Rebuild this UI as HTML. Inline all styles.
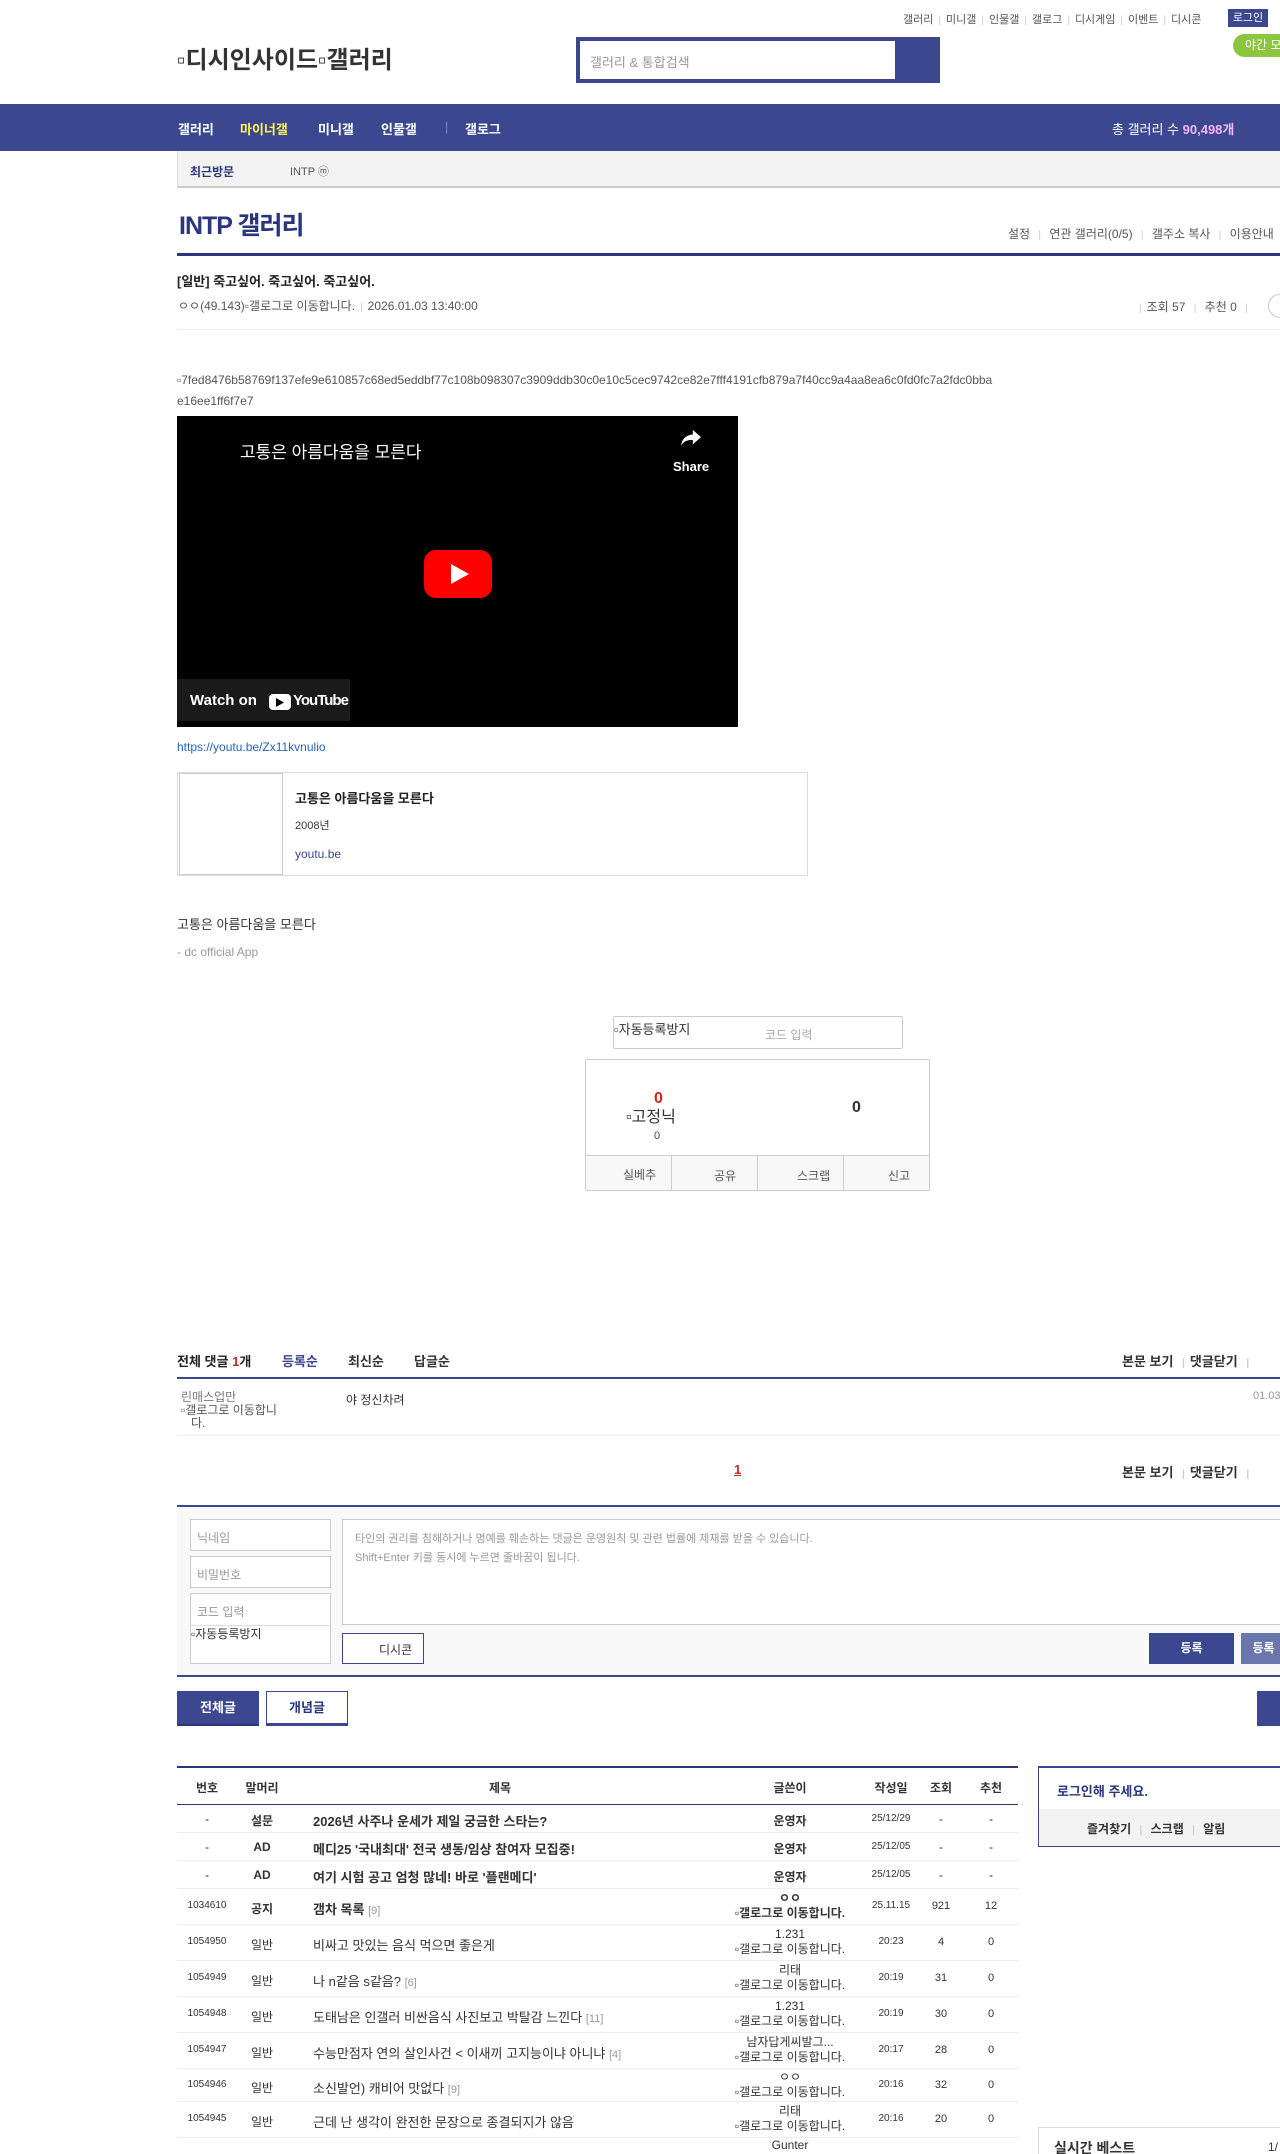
<!DOCTYPE html>
<html><head><meta charset="utf-8">
<style>
*{box-sizing:border-box;margin:0;padding:0}
html,body{width:1280px;height:2154px;overflow:hidden;background:#fff}
body{font-family:"Liberation Sans","Noto Sans CJK KR",sans-serif;color:#333;font-size:12px;position:relative}
.a{position:absolute;white-space:nowrap}
.nav{background:#3b4890;top:104px;left:0;width:1280px;height:47px}
.nav span{position:absolute;top:15px;color:#fff;font-weight:bold;font-size:13px}
.sep{color:#ccc;margin:0 5px;font-size:10px}
.navy{color:#29367c}
.tbl .r{position:absolute;left:177px;width:841px;border-bottom:1px solid #eee}
.tbl .c{position:absolute;font-size:12px;text-align:center;white-space:nowrap}
.ti{position:absolute;left:136px;font-size:13px;white-space:nowrap}
.inp{position:absolute;left:190px;width:141px;height:32px;border:1px solid #ccc;background:#fff;color:#999;font-size:12px;padding:9px 6px}
.btn{position:absolute;font-size:13px;font-weight:bold;text-align:center}
</style></head><body>
<div class="a" style="top:11px;left:903px;font-size:11px;color:#555">갤러리<span class="sep">|</span>미니갤<span class="sep">|</span>인물갤<span class="sep">|</span>갤로그<span class="sep">|</span>디시게임<span class="sep">|</span>이벤트<span class="sep">|</span>디시콘</div>
<div class="a" style="top:9px;left:1228px;width:40px;height:18px;background:#3b4890;color:#fff;font-size:11px;text-align:center;line-height:18px">로그인</div>
<div class="a" style="top:34px;left:1233px;width:60px;height:23px;background:#8bc63e;color:#fff;border-radius:12px;font-size:12px;line-height:23px;padding-left:12px">야간 모드</div>
<div class="a" style="top:40px;left:177px;font-size:24px;font-weight:bold;color:#333">▫디시인사이드▫갤러리</div>
<div class="a" style="top:37px;left:576px;width:364px;height:46px;background:#3b4890"></div>
<div class="a" style="top:41px;left:580px;width:315px;height:38px;background:#fff;color:#999;font-size:13px;padding:11px 10px">갤러리 &amp; 통합검색</div>
<div class="a nav"><span style="left:178px">갤러리</span><span style="left:240px;color:#fff34a">마이너갤</span><span style="left:318px">미니갤</span><span style="left:381px">인물갤</span><span style="left:445px;color:#7c86b8;font-weight:normal">|</span><span style="left:465px">갤로그</span><span style="left:1112px;font-weight:normal">총 갤러리 수 <b style="color:#f8b4ff">90,498개</b></span></div>
<div class="a" style="top:151px;left:177px;width:1103px;height:37px;background:#f3f3f3;border-left:1px solid #ddd;border-bottom:2px solid #ccc"></div>
<div class="a navy" style="top:163px;left:190px;font-size:12px;font-weight:bold">최근방문</div>
<div class="a" style="top:163px;left:290px;font-size:11px;color:#555">INTP ⓜ</div>
<div class="a navy" style="top:206px;left:179px;font-size:25px;font-weight:bold;letter-spacing:-1px">INTP 갤러리</div>
<div class="a" style="top:225px;left:1008px;font-size:12px;color:#555">설정 <span class="sep">|</span> 연관 갤러리(0/5) <span class="sep">|</span> 갤주소 복사 <span class="sep">|</span> 이용안내</div>
<div class="a" style="top:253px;left:177px;width:1103px;height:3px;background:#29367c"></div>
<div class="a" style="top:271px;left:177px;font-size:13px;font-weight:bold;color:#222">[일반] 죽고싶어. 죽고싶어. 죽고싶어.</div>
<div class="a" style="top:297px;left:178px;font-size:12px;color:#555">ㅇㅇ(49.143)▫갤로그로 이동합니다.<span class="sep">|</span>2026.01.03 13:40:00</div>
<div class="a" style="top:298px;left:1134px;font-size:12px;color:#555"><span class="sep">|</span>조회 57 <span class="sep">|</span> 추천 0 <span class="sep">|</span></div>
<div class="a" style="top:294px;left:1268px;width:24px;height:24px;border:1px solid #ccc;border-radius:12px"></div>
<div class="a" style="top:329px;left:177px;width:1103px;height:1px;background:#eee"></div>
<div class="a" style="top:373px;left:177px;font-size:12px;color:#555">▫7fed8476b58769f137efe9e610857c68ed5eddbf77c108b098307c3909ddb30c0e10c5cec9742ce82e7fff4191cfb879a7f40cc9a4aa8ea6c0fd0fc7a2fdc0bba</div>
<div class="a" style="top:394px;left:177px;font-size:12px;color:#555">e16ee1ff6f7e7</div>
<div class="a" style="top:416px;left:177px;width:561px;height:311px;background:#000"></div>
<div class="a" style="top:438px;left:240px;font-size:17px;color:#fff">고통은 아름다움을 모른다</div>
<svg class="a" style="top:428px;left:680px" width="22" height="20" viewBox="0 0 24 22"><path d="M14 2 L23 10 L14 18 V13 C7 13 3 15 1 20 C2 12 6 8 14 7 Z" fill="#fff"/></svg>
<div class="a" style="top:459px;left:673px;font-size:13px;color:#fff;font-weight:bold">Share</div>
<svg class="a" style="top:550px;left:424px" width="68" height="48" viewBox="0 0 68 48"><rect x="0" y="0" width="68" height="48" rx="12" fill="#f00"/><path d="M27 14 L45 24 L27 34 Z" fill="#fff"/></svg>
<div class="a" style="top:679px;left:177px;width:173px;height:42px;background:#1a1a1a"></div>
<div class="a" style="top:692px;left:190px;font-size:15px;color:#fff;font-weight:bold">Watch on</div>
<div class="a" style="top:694px;left:269px;width:22px;height:16px;background:#fff;border-radius:4px"></div>
<svg class="a" style="top:698px;left:276px" width="9" height="9"><path d="M0 0 L8 4.5 L0 9Z" fill="#000"/></svg>
<div class="a" style="top:692px;left:293px;font-size:15px;color:#fff;font-weight:bold;letter-spacing:-1px">YouTube</div>
<div class="a" style="top:740px;left:177px;font-size:12px;color:#2266bb">https://youtu.be/Zx11kvnulio</div>
<div class="a" style="top:772px;left:177px;width:631px;height:104px;border:1px solid #ddd"></div>
<div class="a" style="top:773px;left:179px;width:104px;height:102px;border:1px solid #ccc;background:#fff"></div>
<div class="a" style="top:788px;left:295px;font-size:13px;font-weight:bold;color:#222">고통은 아름다움을 모른다</div>
<div class="a" style="top:817px;left:295px;font-size:11px;color:#333">2008년</div>
<div class="a" style="top:847px;left:295px;font-size:12px;color:#3b4890">youtu.be</div>
<div class="a" style="top:914px;left:177px;font-size:13px;color:#333">고통은 아름다움을 모른다</div>
<div class="a" style="top:945px;left:177px;font-size:12px;color:#999">- dc official App</div>
<div class="a" style="top:1016px;left:613px;width:290px;height:33px;border:1px solid #ccc;border-radius:2px"></div>
<div class="a" style="top:1019px;left:614px;font-size:13px;color:#333">▫자동등록방지</div>
<div class="a" style="top:1026px;left:765px;font-size:12px;color:#aaa">코드 입력</div>
<div class="a" style="top:1059px;left:585px;width:345px;height:132px;border:1px solid #ccc;border-radius:2px"></div>
<div class="a" style="top:1155px;left:586px;width:343px;height:35px;background:#f8f8f8;border-top:1px solid #ccc"></div>
<div class="a" style="top:1155px;left:671px;width:1px;height:36px;background:#ccc"></div>
<div class="a" style="top:1155px;left:757px;width:1px;height:36px;background:#ccc"></div>
<div class="a" style="top:1155px;left:843px;width:1px;height:36px;background:#ccc"></div>
<div class="a" style="top:1166px;left:623px;font-size:12px;color:#555">실베추</div>
<div class="a" style="top:1167px;left:714px;font-size:12px;color:#555">공유</div>
<div class="a" style="top:1167px;left:797px;font-size:12px;color:#555">스크랩</div>
<div class="a" style="top:1167px;left:888px;font-size:12px;color:#555">신고</div>
<div class="a" style="top:1090px;left:654px;font-size:16px;font-weight:bold;color:#c82a1e;line-height:18px">0</div>
<div class="a" style="top:1109px;left:626px;font-size:16px;color:#333;line-height:18px">▫고정닉</div>
<div class="a" style="top:1130px;left:654px;font-size:11px;color:#3b4890;line-height:12px">0</div>
<div class="a" style="top:1099px;left:852px;font-size:16px;font-weight:bold;color:#333">0</div>
<div class="a" style="top:1351px;left:177px;font-size:13px;font-weight:bold;color:#222">전체 댓글 <span style="color:#c82a1e">1</span>개</div>
<div class="a" style="top:1351px;left:282px;font-size:13px;font-weight:bold;color:#3b4890">등록순</div>
<div class="a" style="top:1351px;left:348px;font-size:13px;font-weight:bold;color:#333">최신순</div>
<div class="a" style="top:1351px;left:414px;font-size:13px;font-weight:bold;color:#333">답글순</div>
<div class="a" style="top:1351px;left:1122px;font-size:13px;font-weight:bold;color:#333">본문 보기 <span class="sep">|</span>댓글닫기 <span class="sep">|</span></div>
<div class="a" style="top:1377px;left:177px;width:1103px;height:2px;background:#3b4890"></div>
<div class="a" style="top:1390px;left:181px;font-size:12px;color:#777;line-height:14px">린매스업만</div>
<div class="a" style="top:1404px;left:181px;font-size:12px;color:#555;line-height:13px;white-space:normal;width:130px">▫갤로그로 이동합니<br>&nbsp;&nbsp;&nbsp;다.</div>
<div class="a" style="top:1391px;left:346px;font-size:12px;color:#333">야 정신차려</div>
<div class="a" style="top:1390px;left:1253px;font-size:11px;color:#999">01.03</div>
<div class="a" style="top:1435px;left:177px;width:1103px;height:1px;background:#eee"></div>
<div class="a" style="top:1462px;left:734px;font-size:13px;font-weight:bold;color:#c82a1e;text-decoration:underline">1</div>
<div class="a" style="top:1462px;left:1122px;font-size:13px;font-weight:bold;color:#333">본문 보기 <span class="sep">|</span>댓글닫기 <span class="sep">|</span></div>
<div class="a" style="top:1505px;left:177px;width:1103px;height:172px;background:#f9f9f9;border-top:2px solid #3b4890;border-bottom:2px solid #3b4890"></div>
<div class="inp" style="top:1519px">닉네임</div>
<div class="inp" style="top:1556px">비밀번호</div>
<div class="inp" style="top:1593px;height:71px">코드 입력</div>
<div class="a" style="top:1625px;left:191px;font-size:12px;color:#333">▫자동등록방지</div>
<div class="a" style="top:1625px;left:191px;width:139px;height:1px;background:#ddd"></div>
<div class="a" style="top:1519px;left:342px;width:950px;height:106px;border:1px solid #ccc;background:#fff;font-size:11px;color:#999;padding:10px 12px;line-height:19px;white-space:normal">타인의 권리를 침해하거나 명예를 훼손하는 댓글은 운영원칙 및 관련 법률에 제재를 받을 수 있습니다.<br>Shift+Enter 키를 동시에 누르면 줄바꿈이 됩니다.</div>
<div class="a" style="top:1633px;left:342px;width:82px;height:31px;border:1px solid #3b4890;background:#fff;font-size:12px;color:#333;padding:7px 0 0 36px">디시콘</div>
<div class="btn" style="top:1633px;left:1149px;width:85px;height:31px;background:#3b4890;color:#fff;line-height:31px;font-size:12px">등록</div>
<div class="btn" style="top:1633px;left:1241px;width:85px;height:31px;background:#6b76ac;color:#fff;line-height:31px;font-size:12px;padding-right:40px">등록</div>
<div class="btn" style="top:1691px;left:177px;width:82px;height:35px;background:#3b4890;color:#fff;line-height:33px;border-bottom:2px solid #29367c">전체글</div>
<div class="btn" style="top:1691px;left:266px;width:82px;height:35px;background:#fff;color:#29367c;line-height:31px;border:1px solid #3b4890;border-bottom:3px solid #3b4890">개념글</div>
<div class="btn" style="top:1691px;left:1257px;width:40px;height:35px;background:#3b4890"></div>
<div class="tbl">
<div class="a" style="top:1766px;left:177px;width:841px;height:2px;background:#29367c"></div>
<div class="a" style="top:1804px;left:177px;width:841px;height:1px;background:#29367c"></div>
<div class="c" style="top:1779px;left:187px;width:40px;font-weight:bold">번호</div>
<div class="c" style="top:1779px;left:238px;width:48px;font-weight:bold">말머리</div>
<div class="c" style="top:1779px;left:470px;width:60px;font-weight:bold">제목</div>
<div class="c" style="top:1779px;left:760px;width:60px;font-weight:bold">글쓴이</div>
<div class="c" style="top:1779px;left:866px;width:50px;font-weight:bold">작성일</div>
<div class="c" style="top:1779px;left:926px;width:30px;font-weight:bold">조회</div>
<div class="c" style="top:1779px;left:976px;width:30px;font-weight:bold">추천</div>
<div class="r" style="top:1805px;height:28px"><div class="c" style="top:7px;left:10px;width:40px">-</div><div class="c" style="top:7px;left:61px;width:48px;font-weight:bold">설문</div><div class="ti" style="top:6px;font-weight:bold">2026년 사주나 운세가 제일 궁금한 스타는?</div><div class="c" style="top:7px;left:583px;width:60px;font-weight:bold">운영자</div><div class="c" style="top:8px;left:689px;width:50px;font-size:10px">25/12/29</div><div class="c" style="top:7px;left:749px;width:30px">-</div><div class="c" style="top:7px;left:799px;width:30px">-</div></div>
<div class="r" style="top:1833px;height:28px"><div class="c" style="top:7px;left:10px;width:40px">-</div><div class="c" style="top:7px;left:61px;width:48px;font-weight:bold">AD</div><div class="ti" style="top:6px;font-weight:bold">메디25 '국내최대' 전국 생동/임상 참여자 모집중!</div><div class="c" style="top:7px;left:583px;width:60px;font-weight:bold">운영자</div><div class="c" style="top:8px;left:689px;width:50px;font-size:10px">25/12/05</div><div class="c" style="top:7px;left:749px;width:30px">-</div><div class="c" style="top:7px;left:799px;width:30px">-</div></div>
<div class="r" style="top:1861px;height:28px"><div class="c" style="top:7px;left:10px;width:40px">-</div><div class="c" style="top:7px;left:61px;width:48px;font-weight:bold">AD</div><div class="ti" style="top:6px;font-weight:bold">여기 시험 공고 엄청 많네! 바로 '플랜메디'</div><div class="c" style="top:7px;left:583px;width:60px;font-weight:bold">운영자</div><div class="c" style="top:8px;left:689px;width:50px;font-size:10px">25/12/05</div><div class="c" style="top:7px;left:749px;width:30px">-</div><div class="c" style="top:7px;left:799px;width:30px">-</div></div>
<div class="r" style="top:1889px;height:36px"><div class="c" style="top:11px;left:5px;width:50px;font-size:10px">1034610</div><div class="c" style="top:11px;left:61px;width:48px;font-weight:bold">공지</div><div class="ti" style="top:10px;font-weight:bold">갬차 목록 <span style="color:#999;font-weight:normal;font-size:11px">[9]</span></div><div class="c" style="top:2px;left:543px;width:140px;line-height:15px;font-weight:bold">ㅇㅇ<br>▫갤로그로 이동합니다.</div><div class="c" style="top:11px;left:689px;width:50px;font-size:10px">25.11.15</div><div class="c" style="top:11px;left:749px;width:30px;font-size:11px">921</div><div class="c" style="top:11px;left:799px;width:30px;font-size:11px">12</div></div>
<div class="r" style="top:1925px;height:36px"><div class="c" style="top:11px;left:5px;width:50px;font-size:10px">1054950</div><div class="c" style="top:11px;left:61px;width:48px">일반</div><div class="ti" style="top:10px">비싸고 맛있는 음식 먹으면 좋은게</div><div class="c" style="top:2px;left:543px;width:140px;line-height:15px">1.231<br>▫갤로그로 이동합니다.</div><div class="c" style="top:11px;left:689px;width:50px;font-size:10px">20:23</div><div class="c" style="top:11px;left:749px;width:30px;font-size:11px">4</div><div class="c" style="top:11px;left:799px;width:30px;font-size:11px">0</div></div>
<div class="r" style="top:1961px;height:36px"><div class="c" style="top:11px;left:5px;width:50px;font-size:10px">1054949</div><div class="c" style="top:11px;left:61px;width:48px">일반</div><div class="ti" style="top:10px">나 n같음 s같음? <span style="color:#999;font-size:11px">[6]</span></div><div class="c" style="top:2px;left:543px;width:140px;line-height:15px">리태<br>▫갤로그로 이동합니다.</div><div class="c" style="top:11px;left:689px;width:50px;font-size:10px">20:19</div><div class="c" style="top:11px;left:749px;width:30px;font-size:11px">31</div><div class="c" style="top:11px;left:799px;width:30px;font-size:11px">0</div></div>
<div class="r" style="top:1997px;height:36px"><div class="c" style="top:11px;left:5px;width:50px;font-size:10px">1054948</div><div class="c" style="top:11px;left:61px;width:48px">일반</div><div class="ti" style="top:10px">도태남은 인갤러 비싼음식 사진보고 박탈감 느낀다 <span style="color:#999;font-size:11px">[11]</span></div><div class="c" style="top:2px;left:543px;width:140px;line-height:15px">1.231<br>▫갤로그로 이동합니다.</div><div class="c" style="top:11px;left:689px;width:50px;font-size:10px">20:19</div><div class="c" style="top:11px;left:749px;width:30px;font-size:11px">30</div><div class="c" style="top:11px;left:799px;width:30px;font-size:11px">0</div></div>
<div class="r" style="top:2033px;height:36px"><div class="c" style="top:11px;left:5px;width:50px;font-size:10px">1054947</div><div class="c" style="top:11px;left:61px;width:48px">일반</div><div class="ti" style="top:10px">수능만점자 연의 살인사건 &lt; 이새끼 고지능이냐 아니냐 <span style="color:#999;font-size:11px">[4]</span></div><div class="c" style="top:2px;left:543px;width:140px;line-height:15px">남자답게씨발그...<br>▫갤로그로 이동합니다.</div><div class="c" style="top:11px;left:689px;width:50px;font-size:10px">20:17</div><div class="c" style="top:11px;left:749px;width:30px;font-size:11px">28</div><div class="c" style="top:11px;left:799px;width:30px;font-size:11px">0</div></div>
<div class="r" style="top:2069px;height:33px"><div class="c" style="top:10px;left:5px;width:50px;font-size:10px">1054946</div><div class="c" style="top:10px;left:61px;width:48px">일반</div><div class="ti" style="top:9px">소신발언) 캐비어 맛없다 <span style="color:#999;font-size:11px">[9]</span></div><div class="c" style="top:1px;left:543px;width:140px;line-height:15px">ㅇㅇ<br>▫갤로그로 이동합니다.</div><div class="c" style="top:10px;left:689px;width:50px;font-size:10px">20:16</div><div class="c" style="top:10px;left:749px;width:30px;font-size:11px">32</div><div class="c" style="top:10px;left:799px;width:30px;font-size:11px">0</div></div>
<div class="r" style="top:2102px;height:36px"><div class="c" style="top:11px;left:5px;width:50px;font-size:10px">1054945</div><div class="c" style="top:11px;left:61px;width:48px">일반</div><div class="ti" style="top:10px">근데 난 생각이 완전한 문장으로 종결되지가 않음</div><div class="c" style="top:2px;left:543px;width:140px;line-height:15px">리태<br>▫갤로그로 이동합니다.</div><div class="c" style="top:11px;left:689px;width:50px;font-size:10px">20:16</div><div class="c" style="top:11px;left:749px;width:30px;font-size:11px">20</div><div class="c" style="top:11px;left:799px;width:30px;font-size:11px">0</div></div>
<div class="r" style="top:2138px;height:36px;border:0"><div class="c" style="top:0;left:543px;width:140px;font-size:12px">Gunter</div></div>
</div>
<div class="a" style="top:1766px;left:1038px;width:260px;height:81px;border:1px solid #3b4890;border-top:2px solid #3b4890"></div>
<div class="a navy" style="top:1781px;left:1057px;font-size:13px;font-weight:bold">로그인해 주세요.</div>
<div class="a" style="top:1809px;left:1039px;width:241px;height:37px;background:#f3f3f3"></div>
<div class="a" style="top:1820px;left:1087px;font-size:12px;font-weight:bold;color:#333">즐겨찾기 <span class="sep">|</span> 스크랩 <span class="sep">|</span> 알림</div>
<div class="a" style="top:2127px;left:1038px;width:260px;height:40px;border-top:1px solid #ddd;border-left:1px solid #ddd"></div>
<div class="a" style="top:2138px;left:1054px;font-size:14px;font-weight:bold;color:#333">실시간 베스트</div>
<div class="a" style="top:2140px;left:1268px;font-size:12px;color:#333">1/</div>
</body></html>
